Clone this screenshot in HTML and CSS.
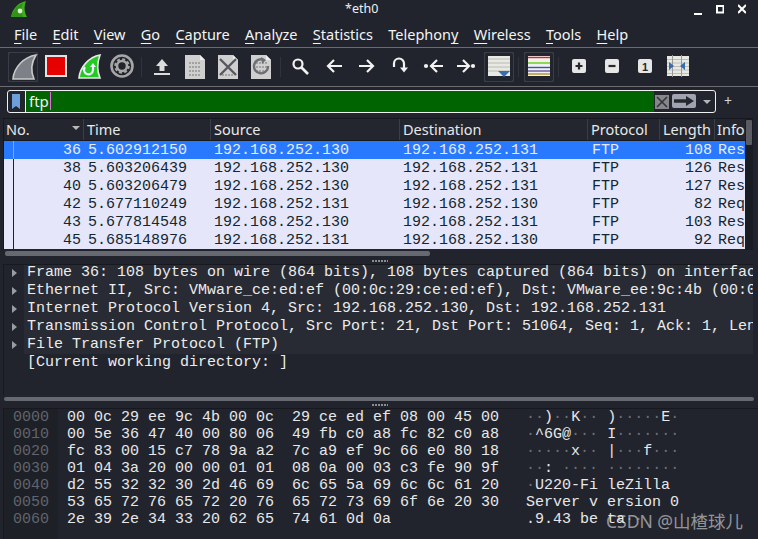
FILE: index.html
```html
<!DOCTYPE html>
<html lang="en">
<head>
<meta charset="utf-8">
<title>*eth0</title>
<link rel="stylesheet" href="styles.css">
</head>
<body>
<div class="window">
  <header class="titlebar">
    <svg class="logo" width="18" height="18" viewBox="0 0 18 18"><path d="M1 17C2 10 7 3 16 1C14 6 14 12 17 17Z" fill="#3fae1d"/><path d="M1 17C3 11 7 5 13 3C11 8 11 13 13 17Z" fill="#2f9416"/><circle cx="10" cy="11" r="2.4" fill="#dfe9d8"/></svg>
    <div class="title">*eth0</div>
    <div class="winctl">
      <svg width="8" height="14" viewBox="0 0 8 14"><rect y="10" width="8" height="2" fill="#fff"/></svg>
      <svg width="8" height="14" viewBox="0 0 8 14"><rect x="1" y="3" width="6.500" height="6.500" fill="none" stroke="#fff" stroke-width="2"/></svg>
      <svg width="8" height="14" viewBox="0 0 8 14"><path d="M0 2L8 10M8 2L0 10" stroke="#fff" stroke-width="2"/></svg>
    </div>
  </header>
  <nav class="menubar">
    <span><u>F</u>ile</span><span><u>E</u>dit</span><span><u>V</u>iew</span><span><u>G</u>o</span><span><u>C</u>apture</span><span><u>A</u>nalyze</span><span><u>S</u>tatistics</span><span>Telephon<u>y</u></span><span><u>W</u>ireless</span><span><u>T</u>ools</span><span><u>H</u>elp</span>
  </nav>
  <div class="toolbar">
    <div class="tool boxed"><svg width="33" height="30" viewBox="0 0 33 30"><path d="M7 27C8 15 18 5 30 3C25 11 25 20 28 27Z" fill="#7d8086" stroke="#c9c9c9" stroke-width="1.600"/></svg></div>
    <div class="tool"><svg width="33" height="30" viewBox="0 0 33 30"><rect x="7" y="4" width="20" height="20" fill="#e60000" stroke="#e2e2e2" stroke-width="2"/></svg></div>
    <div class="tool"><svg width="33" height="30" viewBox="0 0 33 30"><path d="M7 26C8 15 17 5 28 3C25 11 25 19 28 26Z" fill="#24c924" stroke="#e8e8e8" stroke-width="1.600"/><path d="M21 14V18A4.500 4.500 0 1 1 13 15" fill="none" stroke="#eef" stroke-width="2.200"/><path d="M18 15L21 11L24 15Z" fill="#eef"/></svg></div>
    <div class="tool"><svg width="33" height="30" viewBox="0 0 33 30"><circle cx="17" cy="14" r="10.500" fill="none" stroke="#a6a6a6" stroke-width="2.600"/><circle cx="17" cy="14" r="5" fill="none" stroke="#a6a6a6" stroke-width="2.600"/><circle cx="17" cy="14" r="6.800" fill="none" stroke="#a6a6a6" stroke-width="2" stroke-dasharray="3 2.340"/></svg></div>
    <div class="sep"></div>
    <div class="tool"><svg width="33" height="30" viewBox="0 0 33 30"><path d="M17 7L23 14H19.500V19H14.500V14H11Z" fill="#dcdcdc"/><rect x="9" y="21" width="16" height="2" fill="#dcdcdc"/></svg></div>
    <div class="tool"><svg width="33" height="30" viewBox="0 0 33 30"><path d="M7 3H22L27 8V27H7Z" fill="#cfcfcf"/><path d="M22 3V8H27Z" fill="#eee"/><path d="M11 11H23M11 15H23M11 19H23M11 23H23" stroke="#a2a2a2" stroke-width="2" stroke-dasharray="2 1"/></svg></div>
    <div class="tool"><svg width="33" height="30" viewBox="0 0 33 30"><path d="M7 3H22L27 8V27H7Z" fill="#cfcfcf"/><path d="M22 3V8H27Z" fill="#eee"/><path d="M11 23H23" stroke="#a2a2a2" stroke-width="2" stroke-dasharray="2 1"/><path d="M9 7L25 23M25 7L9 23" stroke="#55585e" stroke-width="2.400"/></svg></div>
    <div class="tool"><svg width="33" height="30" viewBox="0 0 33 30"><path d="M7 3H22L27 8V27H7Z" fill="#cfcfcf"/><path d="M22 3V8H27Z" fill="#eee"/><path d="M12 11H23M12 15H23M12 19H23" stroke="#a2a2a2" stroke-width="2" stroke-dasharray="2 1"/><path d="M20 8A7 7 0 1 0 24 14" fill="none" stroke="#6c6f75" stroke-width="2.400"/><path d="M17 5L22 8L18 12Z" fill="#6c6f75"/></svg></div>
    <div class="sep"></div>
    <div class="tool"><svg width="33" height="30" viewBox="0 0 33 30"><circle cx="14" cy="12" r="4.500" fill="none" stroke="#f2f2f2" stroke-width="2.200"/><path d="M17.500 15.500L24 22" stroke="#f2f2f2" stroke-width="2.600"/></svg></div>
    <div class="tool"><svg width="33" height="30" viewBox="0 0 33 30"><path d="M11 14H25M17 8L11 14L17 20" fill="none" stroke="#f2f2f2" stroke-width="2.200"/></svg></div>
    <div class="tool"><svg width="33" height="30" viewBox="0 0 33 30"><path d="M9 14H23M17 8L23 14L17 20" fill="none" stroke="#f2f2f2" stroke-width="2.200"/></svg></div>
    <div class="tool"><svg width="33" height="30" viewBox="0 0 33 30"><path d="M11 15V11.500A5 5 0 0 1 21 11.500V18" fill="none" stroke="#f2f2f2" stroke-width="2.200"/><path d="M17 15.500L21 20.500L25 15.500Z" fill="#f2f2f2"/></svg></div>
    <div class="tool"><svg width="33" height="30" viewBox="0 0 33 30"><circle cx="10" cy="14" r="2.100" fill="#f2f2f2"/><path d="M15 14H27M21 8L15 14L21 20" fill="none" stroke="#f2f2f2" stroke-width="2.200"/></svg></div>
    <div class="tool"><svg width="33" height="30" viewBox="0 0 33 30"><circle cx="24" cy="14" r="2.100" fill="#f2f2f2"/><path d="M8 14H20M14 8L20 14L14 20" fill="none" stroke="#f2f2f2" stroke-width="2.200"/></svg></div>
    <div class="tool boxed"><svg width="33" height="30" viewBox="0 0 33 30"><rect x="6" y="4" width="22" height="20" fill="#e9e9e4"/><path d="M6 7H28M6 11H28M6 15H28M6 19H28" stroke="#b9bbb2" stroke-width="1"/><path d="M15 20H28V24H15Z" fill="#e9e9e4"/><path d="M16 19H28L22 25Z" fill="#3a6cb0"/></svg></div>
    <div class="sep"></div>
    <div class="tool boxed"><svg width="33" height="30" viewBox="0 0 33 30"><rect x="6" y="4" width="22" height="20" fill="#f0f0ee"/><path d="M6 5.500H28" stroke="#dd2222" stroke-width="1.400"/><path d="M6 11H28" stroke="#66cc11" stroke-width="1.400"/><path d="M6 15.500H28" stroke="#3355bb" stroke-width="1.400"/><path d="M6 19H28" stroke="#665599" stroke-width="1.400"/><path d="M6 22H28" stroke="#b8902a" stroke-width="1.400"/></svg></div>
    <div class="sep"></div>
    <div class="tool"><svg width="33" height="30" viewBox="0 0 33 30"><rect x="10" y="7" width="14" height="14" rx="2" fill="#e6e6e6"/><path d="M13.500 14H20.500M17 10.500V17.500" stroke="#26282e" stroke-width="2.200"/></svg></div>
    <div class="tool"><svg width="33" height="30" viewBox="0 0 33 30"><rect x="10" y="7" width="14" height="14" rx="2" fill="#e6e6e6"/><path d="M13.500 14H20.500" stroke="#26282e" stroke-width="2.200"/></svg></div>
    <div class="tool"><svg width="33" height="30" viewBox="0 0 33 30"><rect x="10" y="7" width="14" height="14" rx="2" fill="#e6e6e6"/><text x="17" y="18.500" class="one">1</text></svg></div>
    <div class="tool"><svg width="33" height="30" viewBox="0 0 33 30"><rect x="6" y="4" width="22" height="20" fill="#e9e9e4"/><path d="M6 7.500H28M6 11H28M6 14.500H28M6 18H28M6 21.500H28" stroke="#bdbfb6" stroke-width="1"/><path d="M11.500 3V25M20.500 3V25" stroke="#9a9a94" stroke-width="1"/><path d="M8 10L13 14L8 18Z M24 10L19 14L24 18Z" fill="#3a6cb0"/></svg></div>
  </div>
  <div class="filterrow">
    <div class="filter">
      <div class="bookmark"><svg width="8" height="15" viewBox="0 0 8 15"><path d="M0 0H8V15L4 12L0 15Z" fill="#6f9fd8"/></svg></div>
      <div class="filtertext"><span>ftp</span><i class="caret"></i></div>
      <div class="clearbtn"><svg width="14" height="14" viewBox="0 0 14 14"><rect width="14" height="14" fill="#85878b"/><path d="M2 2L12 12M12 2L2 12" stroke="#33353a" stroke-width="1.600"/></svg></div>
      <div class="applybtn"><svg width="20" height="10" viewBox="0 0 20 10"><path d="M0 3.200H12V0L20 5L12 10V6.800H0Z" fill="#26282e"/></svg></div>
      <div class="dropbtn"></div>
    </div>
    <div class="plus">+</div>
  </div>
  <section class="packets">
    <div class="table">
      <div class="head">
        <div class="h">No.<i class="sort"></i></div><div class="h">Time</div><div class="h">Source</div><div class="h">Destination</div><div class="h">Protocol</div><div class="h">Length</div><div class="h">Info</div>
      </div>
      <div class="row sel"><div class="no">36</div><div class="c4">5.602912150</div><div>192.168.252.130</div><div>192.168.252.131</div><div class="c4">FTP</div><div class="len">108</div><div>Response</div></div>
      <div class="row"><div class="no">38</div><div class="c4">5.603206439</div><div>192.168.252.130</div><div>192.168.252.131</div><div class="c4">FTP</div><div class="len">126</div><div>Response</div></div>
      <div class="row"><div class="no">40</div><div class="c4">5.603206479</div><div>192.168.252.130</div><div>192.168.252.131</div><div class="c4">FTP</div><div class="len">127</div><div>Response</div></div>
      <div class="row"><div class="no">42</div><div class="c4">5.677110249</div><div>192.168.252.131</div><div>192.168.252.130</div><div class="c4">FTP</div><div class="len">82</div><div>Request</div></div>
      <div class="row"><div class="no">43</div><div class="c4">5.677814548</div><div>192.168.252.130</div><div>192.168.252.131</div><div class="c4">FTP</div><div class="len">103</div><div>Response</div></div>
      <div class="row"><div class="no">45</div><div class="c4">5.685148976</div><div>192.168.252.131</div><div>192.168.252.130</div><div class="c4">FTP</div><div class="len">92</div><div>Request</div></div>
    </div>
    <div class="vscroll"><i></i></div>
  </section>
  <div class="hscroll"><i class="thumb-a"></i></div>
  <div class="split"><i></i></div>
  <section class="details">
    <div class="tree">
      <div class="node"><i class="arrow"></i><span>Frame 36: 108 bytes on wire (864 bits), 108 bytes captured (864 bits) on interface eth0, id 0</span></div>
      <div class="node"><i class="arrow"></i><span>Ethernet II, Src: VMware_ce:ed:ef (00:0c:29:ce:ed:ef), Dst: VMware_ee:9c:4b (00:0c:29:ee:9c:4b)</span></div>
      <div class="node"><i class="arrow"></i><span>Internet Protocol Version 4, Src: 192.168.252.130, Dst: 192.168.252.131</span></div>
      <div class="node"><i class="arrow"></i><span>Transmission Control Protocol, Src Port: 21, Dst Port: 51064, Seq: 1, Ack: 1, Len: 54</span></div>
      <div class="node"><i class="arrow"></i><span>File Transfer Protocol (FTP)</span></div>
    </div>
    <div class="leaf">[Current working directory: ]</div>
  </section>
  <div class="hscroll short"><i class="thumb-b"></i></div>
  <div class="split"><i></i></div>
  <section class="hex">
    <div class="addr">0000
0010
0020
0030
0040
0050
0060</div>
    <div class="bytes">00 0c 29 ee 9c 4b 00 0c  29 ce ed ef 08 00 45 00   <b>··</b>)<b>··</b>K<b>··</b> )<b>·····</b>E<b>·</b>
00 5e 36 47 40 00 80 06  49 fb c0 a8 fc 82 c0 a8   <b>·</b>^6G@<b>···</b> I<b>·······</b>
fc 83 00 15 c7 78 9a a2  7c a9 ef 9c 66 e0 80 18   <b>·····</b>x<b>··</b> |<b>···</b>f<b>···</b>
01 04 3a 20 00 00 01 01  08 0a 00 03 c3 fe 90 9f   <b>··</b>: <b>····</b> <b>········</b>
d2 55 32 32 30 2d 46 69  6c 65 5a 69 6c 6c 61 20   <b>·</b>U220-Fi leZilla
53 65 72 76 65 72 20 76  65 72 73 69 6f 6e 20 30   Server v ersion 0
2e 39 2e 34 33 20 62 65  74 61 0d 0a               .9.43 be ta<b>··</b></div>
    <div class="mark">CSDN @山楂球儿</div>
  </section>
</div>
</body>
</html>
```

FILE: styles.css
```css
* { box-sizing: border-box; }
html, body { margin: 0; padding: 0; }
body { background: #21242d; width: 758px; height: 539px; overflow: hidden; }
.window { width: 758px; height: 539px; display: flex; flex-direction: column; color: #eee; font-family: "Noto Sans", sans-serif; position: relative; }

.titlebar { height: 22px; flex: none; display: flex; align-items: flex-start; padding-left: 10px; }
.logo { margin-top: 0; flex: none; }
.title { margin-left: 317px; font-size: 12.500px; line-height: 17px; color: #f0f0f0; width: 32px; }
.winctl { margin-left: auto; margin-right: 12px; display: flex; gap: 14px; padding-top: 3px; }

.menubar { height: 26px; flex: none; display: flex; gap: 15.300px; padding-left: 14px; border-bottom: 1px solid #6a6c72; font-size: 14.500px; line-height: 25px; color: #f4f4f4; }
.menubar u { text-decoration-thickness: 1px; text-underline-offset: 3px; }

.toolbar { height: 39px; flex: none; display: flex; padding: 4px 0 0 6px; border-bottom: 1px solid #6a6c72; }
.tool { width: 33px; height: 30px; flex: none; position: relative; }
.tool svg { display: block; }
.tool.boxed { border-radius: 3px; background: linear-gradient(#3a3d46, #3a3d46) 2px 0 / 30px 30px no-repeat; }
.tool.boxed::before { content: ""; position: absolute; left: 3px; top: 1px; width: 28px; height: 28px; background: #22252e; border-radius: 2px; }
.tool.boxed svg { position: relative; }
.sep { width: 7px; height: 30px; flex: none; position: relative; }
.sep::after { content: ""; position: absolute; left: 3px; top: 5px; height: 20px; width: 1px; background: #30333b; }
.one { font: bold 11px "Liberation Sans", sans-serif; text-anchor: middle; fill: #26282e; }

.filterrow { height: 31px; flex: none; display: flex; align-items: flex-start; padding: 3px 0 0 7px; }
.filter { width: 709px; height: 23px; border: 1px solid #f0f0f0; border-radius: 3px; display: flex; align-items: stretch; overflow: hidden; background: #22252e; }
.bookmark { width: 18px; flex: none; border-right: 1px solid #f0f0f0; display: flex; align-items: center; justify-content: center; padding-right: 1px; }
.filtertext { width: 628px; flex: none; background: #006400; font-size: 15px; line-height: 20px; padding-left: 3px; display: flex; color: #f0f0f0; }
.caret { display: block; width: 1px; height: 18px; margin: 1px 0 0 1px; background: #e070e0; }
.clearbtn { width: 17px; flex: none; display: flex; align-items: center; padding-left: 1px; }
.applybtn { width: 24px; height: 14px; margin: 3px 0 0 1px; border-radius: 2px; background: #a1a4b0; display: flex; align-items: center; justify-content: center; flex: none; }
.dropbtn { width: 0; height: 0; border: 4px solid transparent; border-top: 4px solid #b5b5b5; border-bottom: 0; margin: 9px 0 0 7px; }
.plus { margin-left: 8px; font-size: 14px; line-height: 21px; color: #d6d6d6; }

.packets { height: 132px; flex: none; display: flex; margin-left: 3px; width: 750px; border-top: 1px solid #16181e; }
.table { width: 742px; flex: none; border-left: 1px solid #16181e; overflow: hidden; }
.head, .row { display: grid; grid-template-columns: 80px 127px 189px 188px 72px 55px 30px; width: 741px; }
.head { height: 22px; background: #23262f; font-size: 14.500px; line-height: 21px; color: #e8e8e8; border-bottom: 1px solid #17191f; }
.h { padding-left: 3px; border-right: 1px solid #3b3e47; position: relative; white-space: nowrap; overflow: hidden; }
.h:first-child { padding-left: 2px; }
.h:last-child { border-right: 0; padding-left: 2px; }
.sort { position: absolute; right: 3px; top: 7px; width: 0; height: 0; border: 4px solid transparent; border-top: 4px solid #b9b9b9; border-bottom: 0; }
.row { height: 18px; background: #e6e6fa; color: #12272e; font: 15px/20px "Liberation Mono", monospace; }
.row > div { padding-left: 3px; white-space: nowrap; overflow: hidden; height: 18px; }
.row > .c4 { padding-left: 4px; }
.row > .no { padding: 0 3px 0 0; text-align: right; background: linear-gradient(#12272e, #12272e) 9px 0 / 1px 100% no-repeat; }
.row > .len { padding: 0 3px 0 0; text-align: right; }
.row.sel { background: #2979ff; color: #e6ecff; }
.row.sel > .no { background-image: linear-gradient(#8aa8d8, #8aa8d8); }
.vscroll { width: 8px; background: #1a1c23; padding: 1px 1px 0; }
.vscroll i { display: block; height: 25px; background: #5a5c62; border-radius: 1px; }

.hscroll { height: 9px; flex: none; margin: 0 5px 0 5px; width: 741px; padding-top: 1px; }
.hscroll i { display: block; height: 5px; border-radius: 2px; background: #666a70; }
.thumb-a { width: 425px; }
.hscroll.short { height: 8px; width: 750px; margin-left: 4px; padding-top: 2px; }
.hscroll.short i { height: 4px; }
.thumb-b { width: 100%; }

.split { height: 5px; flex: none; position: relative; }
.split i { position: absolute; left: 372px; top: 1px; width: 16px; height: 2px; background: repeating-linear-gradient(90deg, #8a8c92 0 2px, transparent 2px 3px); }

.details { height: 131px; flex: none; margin-left: 3px; width: 750px; font: 15px/18px "Liberation Mono", monospace; color: #ececec; border-left: 1px solid #17191f; border-top: 1px solid #17191f; overflow: hidden; }
.tree { background: linear-gradient(#282b33, #282b33) 20px 0 no-repeat; }
.node { height: 18px; display: flex; white-space: nowrap; align-items: flex-start; }
.node:first-child { margin-top: -1px; }
.arrow { width: 0; height: 0; margin: 5px 0 0 8px; border: 4px solid transparent; border-left: 5px solid #9a9ca2; border-right: 0; flex: none; margin-right: 10px; }
.leaf { padding-left: 23px; height: 18px; white-space: nowrap; background: #21242d; }

.hex { flex: 1; min-height: 0; margin-left: 3px; display: flex; position: relative; font: 15px/17px "Liberation Mono", monospace; border-top: 1px solid #17191f; border-left: 1px solid #17191f; color: #e8e8e8; overflow: hidden; }
.addr { width: 54px; flex: none; background: #1d2027; color: #62656b; padding-left: 9px; white-space: pre; }
.bytes { padding-left: 9px; white-space: pre; }
.bytes b { font-weight: 400; color: #6c6f75; }
.mark { position: absolute; left: 602px; top: 101px; font: 17.500px/22px "Noto Sans", "Noto Sans CJK SC", sans-serif; color: rgba(225,225,225,0.6); white-space: nowrap; }
```
